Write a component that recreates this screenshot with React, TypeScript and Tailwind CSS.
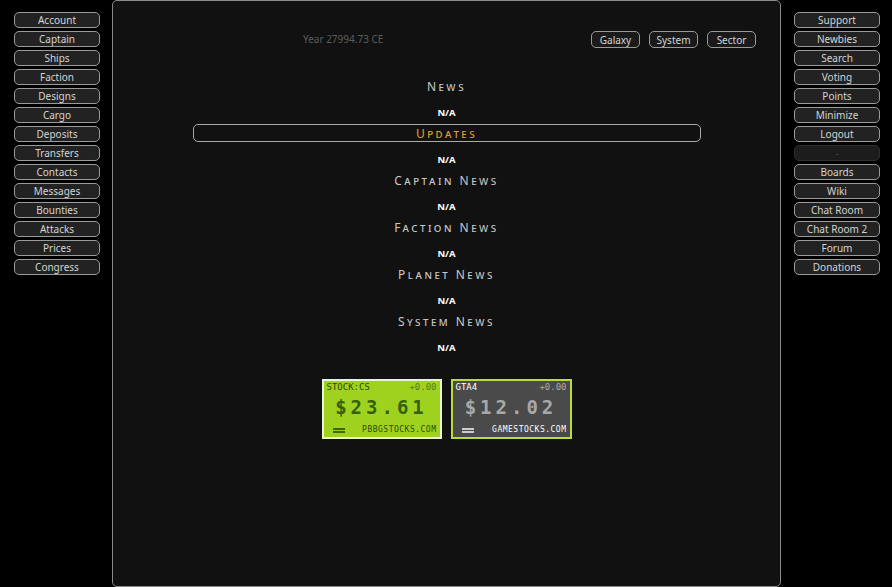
const leftLinks = [
  "Account",
  "Captain",
  "Ships",
  "Faction",
  "Designs",
  "Cargo",
  "Deposits",
  "Transfers",
  "Contacts",
  "Messages",
  "Bounties",
  "Attacks",
  "Prices",
  "Congress",
];

const rightLinks = [
  "Support",
  "Newbies",
  "Search",
  "Voting",
  "Points",
  "Minimize",
  "Logout",
  "-",
  "Boards",
  "Wiki",
  "Chat Room",
  "Chat Room 2",
  "Forum",
  "Donations",
];

const sections = ["Captain News", "Faction News", "Planet News", "System News"];

const font = { fontFamily: "'Noto Sans', 'DejaVu Sans', sans-serif" };

const NavButton = ({ label }: { label: string }) => {
  const off = label === "-";
  return (
    <div
      className={
        off
          ? "h-4 w-[86px] rounded-[5px] border border-[#2e2e2e] bg-[#1c1c1c] text-center text-[10px] leading-[14px] text-[#444]"
          : "h-4 w-[86px] rounded-[5px] border border-[#9a9a9a] bg-[#222] text-center text-[10px] leading-[14px] text-[#d4d4d4]"
      }
    >
      {label}
    </div>
  );
};

const Heading = ({ text, orange }: { text: string; orange?: boolean }) => (
  <div
    className={
      orange
        ? "text-[12px] leading-[15px] tracking-[2.5px] text-[#e3a226] [font-variant:small-caps]"
        : "text-[12px] leading-[15px] tracking-[2.5px] text-[#c8c8c8] [font-variant:small-caps]"
    }
  >
    {text}
  </div>
);

const NA = () => (
  <div className="text-[9.5px] font-bold leading-[12px] text-white">N/A</div>
);

const StockCard = ({
  sym,
  price,
  site,
  green,
}: {
  sym: string;
  price: string;
  site: string;
  green?: boolean;
}) => (
  <div
    className={
      green
        ? "flex h-[60px] w-[120px] flex-col border-2 border-[#e8f5d0] bg-[#9ed21e] px-[3px] py-[1px] text-[#2f4a06]"
        : "flex h-[60px] w-[121px] flex-col border-2 border-[#b8dc3c] bg-[#4a4a4a] px-[3px] py-[1px] text-[#9a9a9a]"
    }
    style={{ fontFamily: "'DejaVu Sans Mono', 'Liberation Mono', monospace" }}
  >
    <div className="flex justify-between text-[9px] leading-[11px]">
      <span className={green ? "text-[#2f4a06]" : "text-white"}>{sym}</span>
      <span className={green ? "text-[#5a7a20]" : "text-[#aaa]"}>+0.00</span>
    </div>
    <div
      className={
        green
          ? "mt-[3px] text-center text-[19px] font-bold leading-[22px] tracking-[4px] text-[#36600a]"
          : "mt-[3px] text-center text-[19px] font-bold leading-[22px] tracking-[4px] text-[#a8a8a8]"
      }
    >
      {price}
    </div>
    <div className="mt-auto flex items-center justify-between pb-[1px]">
      <div className="flex flex-col gap-[1px] pl-[6px]">
        <div className={green ? "h-[2px] w-3 bg-[#3d6a06]" : "h-[2px] w-3 bg-[#ccc]"} />
        <div className={green ? "h-[2px] w-3 bg-[#3d6a06]" : "h-[2px] w-3 bg-[#ccc]"} />
      </div>
      <span
        className={
          green
            ? "text-[8px] leading-[10px] tracking-[0.5px] text-[#2f4a06]"
            : "text-[8px] leading-[10px] tracking-[0.5px] text-white"
        }
      >
        {site}
      </span>
    </div>
  </div>
);

export default function App() {
  return (
    <div className="flex h-[587px] w-[892px] bg-black" style={font}>
      <div className="flex w-[112px] flex-col gap-[3px] pl-[14px] pt-3">
        {leftLinks.map((l) => (
          <NavButton key={l} label={l} />
        ))}
      </div>

      <div className="flex h-[587px] w-[669px] flex-col rounded-[5px] border border-[#8a8a8a] bg-[#111]">
        <div className="flex items-start pt-[30px]">
          <div className="pl-[190px] pt-[2px] text-[10px] leading-[13px] text-[#5c5c5c]">
            Year 27994.73 CE
          </div>
          <div className="ml-auto flex gap-[9px] pr-6">
            {["Galaxy", "System", "Sector"].map((b) => (
              <div
                key={b}
                className="h-[17px] w-[49px] rounded-[5px] border border-[#9a9a9a] bg-[#1a1a1a] text-center text-[10px] leading-[16px] text-[#d4d4d4]"
              >
                {b}
              </div>
            ))}
          </div>
        </div>

        <div className="mt-[31px] flex flex-col items-center">
          <Heading text="News" />
          <div className="mt-[13px]">
            <NA />
          </div>
          <div className="mt-[5px] flex h-[18px] w-[508px] items-center justify-center rounded-[5px] border border-[#a8a8a8]">
            <Heading text="Updates" orange />
          </div>
          <div className="mt-[12px]">
            <NA />
          </div>
          {sections.map((s) => (
            <div key={s} className="flex flex-col items-center">
              <div className="mt-[7px]">
                <Heading text={s} />
              </div>
              <div className="mt-[13px]">
                <NA />
              </div>
            </div>
          ))}

          <div className="mt-[25px] flex gap-[9px]">
            <StockCard sym="STOCK:CS" price="$23.61" site="PBBGSTOCKS.COM" green />
            <StockCard sym="GTA4" price="$12.02" site="GAMESTOCKS.COM" />
          </div>
        </div>
      </div>

      <div className="flex flex-col gap-[3px] pl-[13px] pt-3">
        {rightLinks.map((l) => (
          <NavButton key={l} label={l} />
        ))}
      </div>
    </div>
  );
}
